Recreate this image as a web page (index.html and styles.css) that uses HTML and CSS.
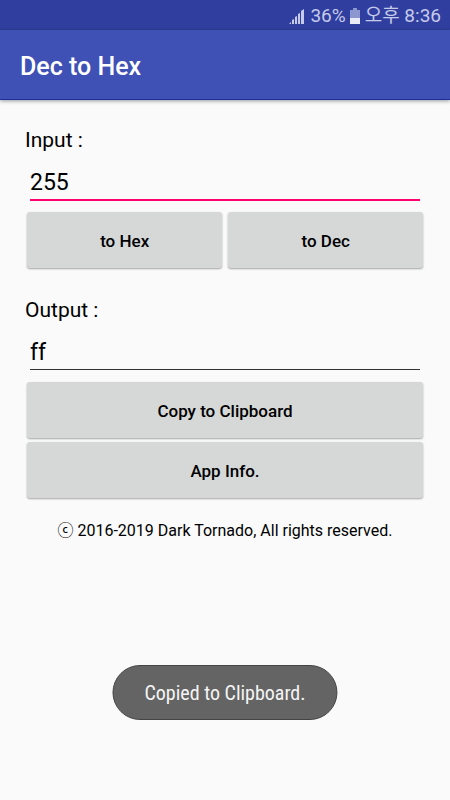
FILE: index.html
```html
<!DOCTYPE html>
<html lang="en">
<head>
  <meta charset="UTF-8">
  <meta name="viewport" content="width=device-width, initial-scale=1">
  <title>Dec to Hex</title>
  <link rel="stylesheet" href="styles.css">
</head>
<body>

  <div class="status-bar">
    <svg class="signal" width="16" height="16" viewBox="0 0 16 16" fill="#c5cae9">
      <path d="M0 16l2-2v2zM3 16v-4l2-1v5zM6 16V9l2-1v8zM9 16V6l2-1v11zM12 16V3l3-2v15z"/>
    </svg>
    <span>36%</span>
    <svg class="battery" width="10" height="16" viewBox="0 0 10 16">
      <path fill="#8c96cf" d="M3 0h4v2h3v8H0V2h3z"/>
      <path fill="#e8eaf6" d="M0 10h10v6H0z"/>
    </svg>
    <span lang="ko">오후 8:36</span>
  </div>

  <header>
    <h1>Dec to Hex</h1>
  </header>

  <main>
    <section class="group">
      <label for="input">Input :</label>
      <input type="text" id="input" class="active" value="255">
      <div class="buttons">
        <button type="button" id="toHex">to Hex</button>
        <button type="button" id="toDec">to Dec</button>
      </div>
    </section>

    <section class="group">
      <label for="output">Output :</label>
      <input type="text" id="output" value="ff">
      <div class="buttons stacked">
        <button type="button" id="copy">Copy to Clipboard</button>
        <button type="button" id="info">App Info.</button>
      </div>
    </section>

    <p class="copyright">ⓒ 2016-2019 Dark Tornado, All rights reserved.</p>
  </main>

  <div class="toast" role="status">Copied to Clipboard.</div>

  <script>
    const input = document.getElementById('input');
    const output = document.getElementById('output');

    function convert(from, to) {
      const value = parseInt(input.value, from);
      output.value = isNaN(value) ? '' : value.toString(to);
    }

    document.getElementById('toHex').onclick = () => convert(10, 16);
    document.getElementById('toDec').onclick = () => convert(16, 10);
    document.getElementById('copy').onclick = () => {
      output.select();
      document.execCommand('copy');
    };
  </script>
</body>
</html>
```

FILE: styles.css
```css
* {
  box-sizing: border-box;
}

body {
  margin: 0;
  min-height: 100vh;
  background: #fafafa;
  color: #000;
  font-family: Roboto, "Noto Sans CJK KR", sans-serif;
}

.status-bar {
  display: flex;
  align-items: center;
  justify-content: flex-end;
  height: 30px;
  padding: 2px 9px 0 0;
  background: #303f9f;
  color: #c5cae9;
  font-size: 19px;
  line-height: 28px;
}

.signal {
  margin-right: 5px;
}

.battery {
  margin: 0 5px 0 4px;
}

header {
  display: flex;
  align-items: center;
  height: 70px;
  padding: 4px 20px 0;
  background: #3f51b5;
  border-bottom: 1px solid #1a2f9c;
  color: #fff;
  box-shadow: 0 1px 4px rgba(0, 0, 0, 0.4);
}

h1 {
  margin: 0;
  font-size: 25px;
  font-weight: 500;
}

main {
  padding: 25px 27px;
}

.group {
  display: flex;
  flex-direction: column;
  margin-bottom: 27px;
}

label {
  margin-left: -2px;
  font-size: 21px;
  line-height: 30px;
}

input {
  height: 46px;
  margin: 0 3px 11px;
  padding: 10px 0 0;
  border: 0;
  border-bottom: 1px solid #333;
  border-radius: 0;
  outline: 0;
  background: none;
  color: #000;
  font: 23px Roboto, sans-serif;
}

#output {
  height: 45px;
  margin-bottom: 12px;
}

.active {
  border-bottom: 2px solid #ff0072;
}

.buttons {
  display: flex;
  gap: 6px;
}

.stacked {
  flex-direction: column;
  gap: 4px;
}

button {
  flex: 1 0 auto;
  height: 56px;
  padding: 2px 0 0;
  border: 0;
  border-radius: 3px;
  background: #d6d8d7;
  box-shadow: 0 1px 2px rgba(0, 0, 0, 0.35);
  color: #000;
  font: 500 17px Roboto, sans-serif;
}

.copyright {
  margin: -6px 0 0;
  font-size: 16px;
  line-height: 24px;
  text-align: center;
}

.toast {
  position: fixed;
  bottom: 80px;
  left: 50%;
  transform: translateX(-50%);
  padding: 13px 31px 12px;
  border: 1px solid #444;
  border-radius: 28px;
  background: #646464;
  color: #f5f5f5;
  font-family: "Roboto Condensed", Roboto, sans-serif;
  font-size: 20px;
  line-height: 28px;
  white-space: nowrap;
}
```
